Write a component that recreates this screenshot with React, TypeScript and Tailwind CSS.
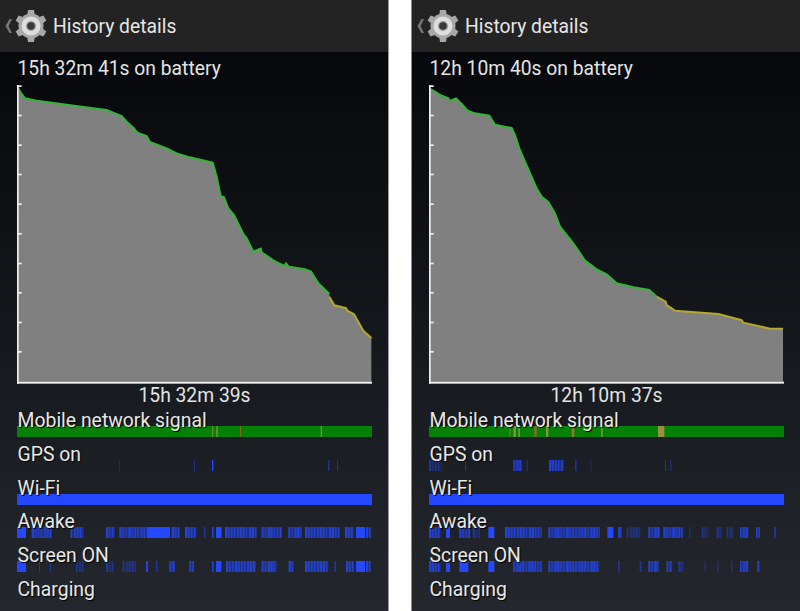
const FONT = "font-['Roboto','Liberation_Sans',sans-serif]";

type Pt = [number, number];
type Seg = [number, number, "solid" | "stripes" | "faint"];
type Mark = [number, number, string];

type PanelData = {
  elapsed: string;
  axis: string;
  x0: number;
  green: Pt[];
  yellow: Pt[];
  marks: Mark[];
  gps: Seg[];
  awake: Seg[];
  screen: Seg[];
};

const LEFT: PanelData = {
  elapsed: "15h 32m 41s on battery",
  axis: "15h 32m 39s",
  x0: 51,
  green: [
    [53, 22], [62, 38], [75, 55], [110, 62], [200, 74], [320, 90], [345, 100], [365, 108], [380, 125],
    [400, 143], [412, 158], [440, 168], [450, 186], [500, 205], [530, 220], [570, 232], [638, 248],
    [650, 290], [662, 348], [672, 352], [685, 385], [702, 405], [730, 462], [740, 475], [760, 515],
    [782, 506], [785, 517], [820, 541], [852, 558], [858, 550], [866, 560], [915, 568], [933, 575],
    [955, 610], [988, 642],
  ],
  yellow: [[988, 650], [1003, 676], [1038, 684], [1042, 692], [1062, 703], [1090, 752], [1114, 774]],
  marks: [[636, 640, "#5f8f2a"], [648, 654, "#4f9030"], [720, 722, "#c0642a"], [962, 966, "#5f9a3a"]],
  gps: [[357, 359, "faint"], [582, 585, "faint"], [636, 640, "solid"], [984, 989, "faint"], [1011, 1014, "faint"]],
  awake: [
    [51, 78, "solid"], [95, 155, "stripes"], [212, 250, "stripes"], [318, 345, "stripes"], [358, 440, "stripes"],
    [441, 510, "solid"], [515, 540, "stripes"], [555, 590, "stripes"], [612, 618, "faint"], [636, 642, "stripes"],
    [648, 665, "solid"], [675, 770, "stripes"], [785, 845, "stripes"], [865, 905, "stripes"], [915, 1020, "stripes"],
    [1035, 1062, "stripes"], [1068, 1095, "solid"], [1098, 1114, "stripes"],
  ],
  screen: [
    [51, 78, "solid"], [117, 120, "faint"], [150, 153, "faint"], [228, 250, "faint"], [318, 340, "faint"],
    [368, 408, "faint"], [438, 445, "stripes"], [468, 474, "faint"], [508, 525, "stripes"], [568, 582, "stripes"],
    [636, 642, "stripes"], [648, 664, "solid"], [678, 768, "stripes"], [785, 830, "stripes"], [866, 880, "stripes"],
    [915, 985, "stripes"], [1003, 1008, "faint"], [1038, 1062, "stripes"], [1068, 1095, "solid"], [1098, 1112, "stripes"],
  ],
};

const RIGHT: PanelData = {
  elapsed: "12h 10m 40s on battery",
  axis: "12h 10m 37s",
  x0: 87,
  green: [
    [90, 27], [105, 35], [120, 45], [145, 55], [150, 63], [168, 55], [185, 72], [203, 92], [225, 100],
    [268, 107], [285, 134], [335, 144], [345, 165], [358, 205], [375, 245], [410, 325], [425, 350],
    [445, 366], [465, 400], [480, 440], [520, 490], [555, 542], [590, 568], [620, 583], [650, 610],
    [700, 622], [748, 630], [770, 650],
  ],
  yellow: [[770, 650], [797, 665], [800, 675], [825, 692], [955, 702], [1025, 720], [1030, 728], [1110, 746], [1149, 746]],
  marks: [
    [328, 332, "#4f8a2a"], [340, 348, "#7f8f3a"], [355, 360, "#7f8f3a"], [403, 410, "#8a6a2a"], [438, 445, "#7f9a3a"],
    [515, 523, "#96752f"], [603, 608, "#6f9a3a"], [774, 793, "#9c8f45"],
  ],
  gps: [
    [87, 125, "faint"], [195, 198, "faint"], [340, 365, "stripes"], [380, 383, "faint"], [447, 490, "stripes"],
    [525, 530, "faint"], [572, 574, "faint"], [795, 798, "faint"], [811, 814, "faint"],
  ],
  awake: [
    [87, 122, "stripes"], [138, 150, "solid"], [178, 210, "stripes"], [218, 240, "faint"], [265, 283, "solid"],
    [315, 425, "stripes"], [445, 600, "stripes"], [622, 640, "solid"], [655, 665, "stripes"], [680, 725, "faint"],
    [745, 780, "stripes"], [790, 850, "stripes"], [868, 871, "faint"], [905, 925, "faint"], [950, 965, "faint"],
    [980, 1000, "faint"], [1020, 1045, "stripes"], [1068, 1080, "stripes"], [1122, 1128, "faint"],
  ],
  screen: [
    [87, 122, "stripes"], [138, 150, "solid"], [178, 205, "solid"], [265, 283, "solid"], [340, 425, "stripes"],
    [445, 598, "stripes"], [654, 659, "faint"], [719, 724, "faint"], [745, 775, "stripes"], [800, 815, "stripes"],
    [835, 850, "faint"], [914, 917, "faint"], [952, 955, "faint"], [994, 997, "faint"], [1020, 1045, "stripes"],
    [1072, 1080, "stripes"],
  ],
};

const TICKS = [18, 106, 195, 283, 372, 461, 550, 638, 727, 815];

function line(pts: Pt[]) {
  return pts.map((p) => p.join(",")).join(" ");
}

function GearIcon() {
  const teeth = [0, 60, 120, 180, 240, 300];
  return (
    <svg width="46" height="38" viewBox="0 0 46 38" className="shrink-0">
      <path d="M11 12 L7.5 19 L11 26 L8.5 26 L4.5 19 L8.5 12 Z" fill="#777" />
      {teeth.map((a) => (
        <path key={a} d="M25.5 13 L27 3 L33 3 L34.5 13 Z" fill="#a8a8a8" transform={`rotate(${a} 30 19)`} />
      ))}
      <circle cx="30" cy="19" r="12.5" fill="#a8a8a8" />
      <circle cx="30" cy="19" r="9.5" fill="#dedede" />
      <circle cx="30" cy="19" r="5" fill="#9a9a9a" />
      <circle cx="30" cy="19" r="3.8" fill="#3a3a3a" />
    </svg>
  );
}

function Chart({ data }: { data: PanelData }) {
  const last = data.yellow[data.yellow.length - 1];
  const area = [...data.green, ...data.yellow, [last[0], 905] as Pt, [data.x0 + 3, 905] as Pt];
  return (
    <svg width="355" height="301" viewBox={`${data.x0} 12 1065 903`} className="block">
      <polygon points={line(area)} fill="#808080" />
      <polyline points={line(data.green)} fill="none" stroke="#36b33a" strokeWidth="6" />
      <polyline points={line(data.yellow)} fill="none" stroke="#b5a82c" strokeWidth="6" />
      <rect x={data.x0} y="15" width="5" height="896" fill="#f0f0f0" />
      <rect x={data.x0} y="905" width="1065" height="6" fill="#f0f0f0" />
      {TICKS.map((y) => (
        <rect key={y} x={data.x0} y={y - 2} width="14" height="5" fill="#f0f0f0" />
      ))}
    </svg>
  );
}

function SegBar({ x0, segs }: { x0: number; segs: Seg[] }) {
  return (
    <svg width="355" height="11" viewBox={`${x0} 0 1065 33`} preserveAspectRatio="none" className="block">
      {segs.map(([a, b, kind]) => {
        if (kind === "solid") return <rect key={a} x={a} y="0" width={b - a} height="33" fill="#2448ff" />;
        const under = kind === "faint" ? 0.12 : 0.35;
        const alpha = kind === "faint" ? 0.45 : 0.75;
        const bars = [];
        for (let x = a, i = 0; x < b; x += 9, i++) {
          const w = Math.min(4 + ((a + i * 7) % 4), b - x);
          bars.push(<rect key={x} x={x} y="0" width={w} height="33" fill="#2448ff" opacity={alpha - ((i * 5) % 3) * 0.1} />);
        }
        return (
          <g key={a}>
            <rect x={a} y="0" width={b - a} height="33" fill="#2448ff" opacity={under} />
            {bars}
          </g>
        );
      })}
    </svg>
  );
}

function Row({ label, children }: { label: string; children?: React.ReactNode }) {
  return (
    <div className="h-[33.75px]">
      <div className="relative z-10 h-[24px] text-[19.4px] leading-[26px] text-[#e8e8e8] [text-shadow:1px_1px_1px_#000]">{label}</div>
      <div className="mt-[-6px]">{children}</div>
    </div>
  );
}

function Panel({ data, edge }: { data: PanelData; edge: string }) {
  return (
    <div className={`h-[611px] w-[389px] shrink-0 bg-gradient-to-b from-[#050608] to-[#24282e] ${edge} ${FONT}`}>
      <div className="flex h-[52px] items-center bg-[#232323] pl-[1px]">
        <GearIcon />
        <span className="ml-[6px] translate-y-[1px] text-[19.3px] text-[#e6e6e6]">History details</span>
      </div>
      <div className="pl-[17px]">
        <div className="mt-[4px] h-[26px] pl-[0.5px] text-[19.3px] leading-[26px] text-[#e4e4e4]">{data.elapsed}</div>
        <div className="mt-[2px]">
          <Chart data={data} />
        </div>
        <div className="mt-[-1px] h-[24px] w-[355px] text-center text-[19.3px] leading-[24px] text-[#e4e4e4]">{data.axis}</div>
        <div className="w-[355px] pl-[0.5px]">
          <Row label="Mobile network signal">
            <div className="relative ml-[-0.5px] h-[11px] w-[355px] bg-[#078007]">
              <svg width="355" height="11" viewBox={`${data.x0} 0 1065 33`} preserveAspectRatio="none" className="absolute inset-0">
                {data.marks.map(([a, b, c]) => (
                  <rect key={a} x={a} y="0" width={b - a} height="33" fill={c} />
                ))}
              </svg>
            </div>
          </Row>
          <Row label="GPS on">
            <div className="ml-[-0.5px]"><SegBar x0={data.x0} segs={data.gps} /></div>
          </Row>
          <Row label="Wi-Fi">
            <div className="ml-[-0.5px] h-[11px] w-[355px] bg-[#2448ff]" />
          </Row>
          <Row label="Awake">
            <div className="ml-[-0.5px]"><SegBar x0={data.x0} segs={data.awake} /></div>
          </Row>
          <Row label="Screen ON">
            <div className="ml-[-0.5px]"><SegBar x0={data.x0} segs={data.screen} /></div>
          </Row>
          <Row label="Charging" />
        </div>
      </div>
    </div>
  );
}

export default function App() {
  return (
    <div className="flex h-[611px] w-[800px] gap-[22px] overflow-hidden bg-white">
      <Panel data={LEFT} edge="border-r border-[#9a9a9a]" />
      <Panel data={RIGHT} edge="border-l border-[#8a8a8a] ml-[0px]" />
    </div>
  );
}
